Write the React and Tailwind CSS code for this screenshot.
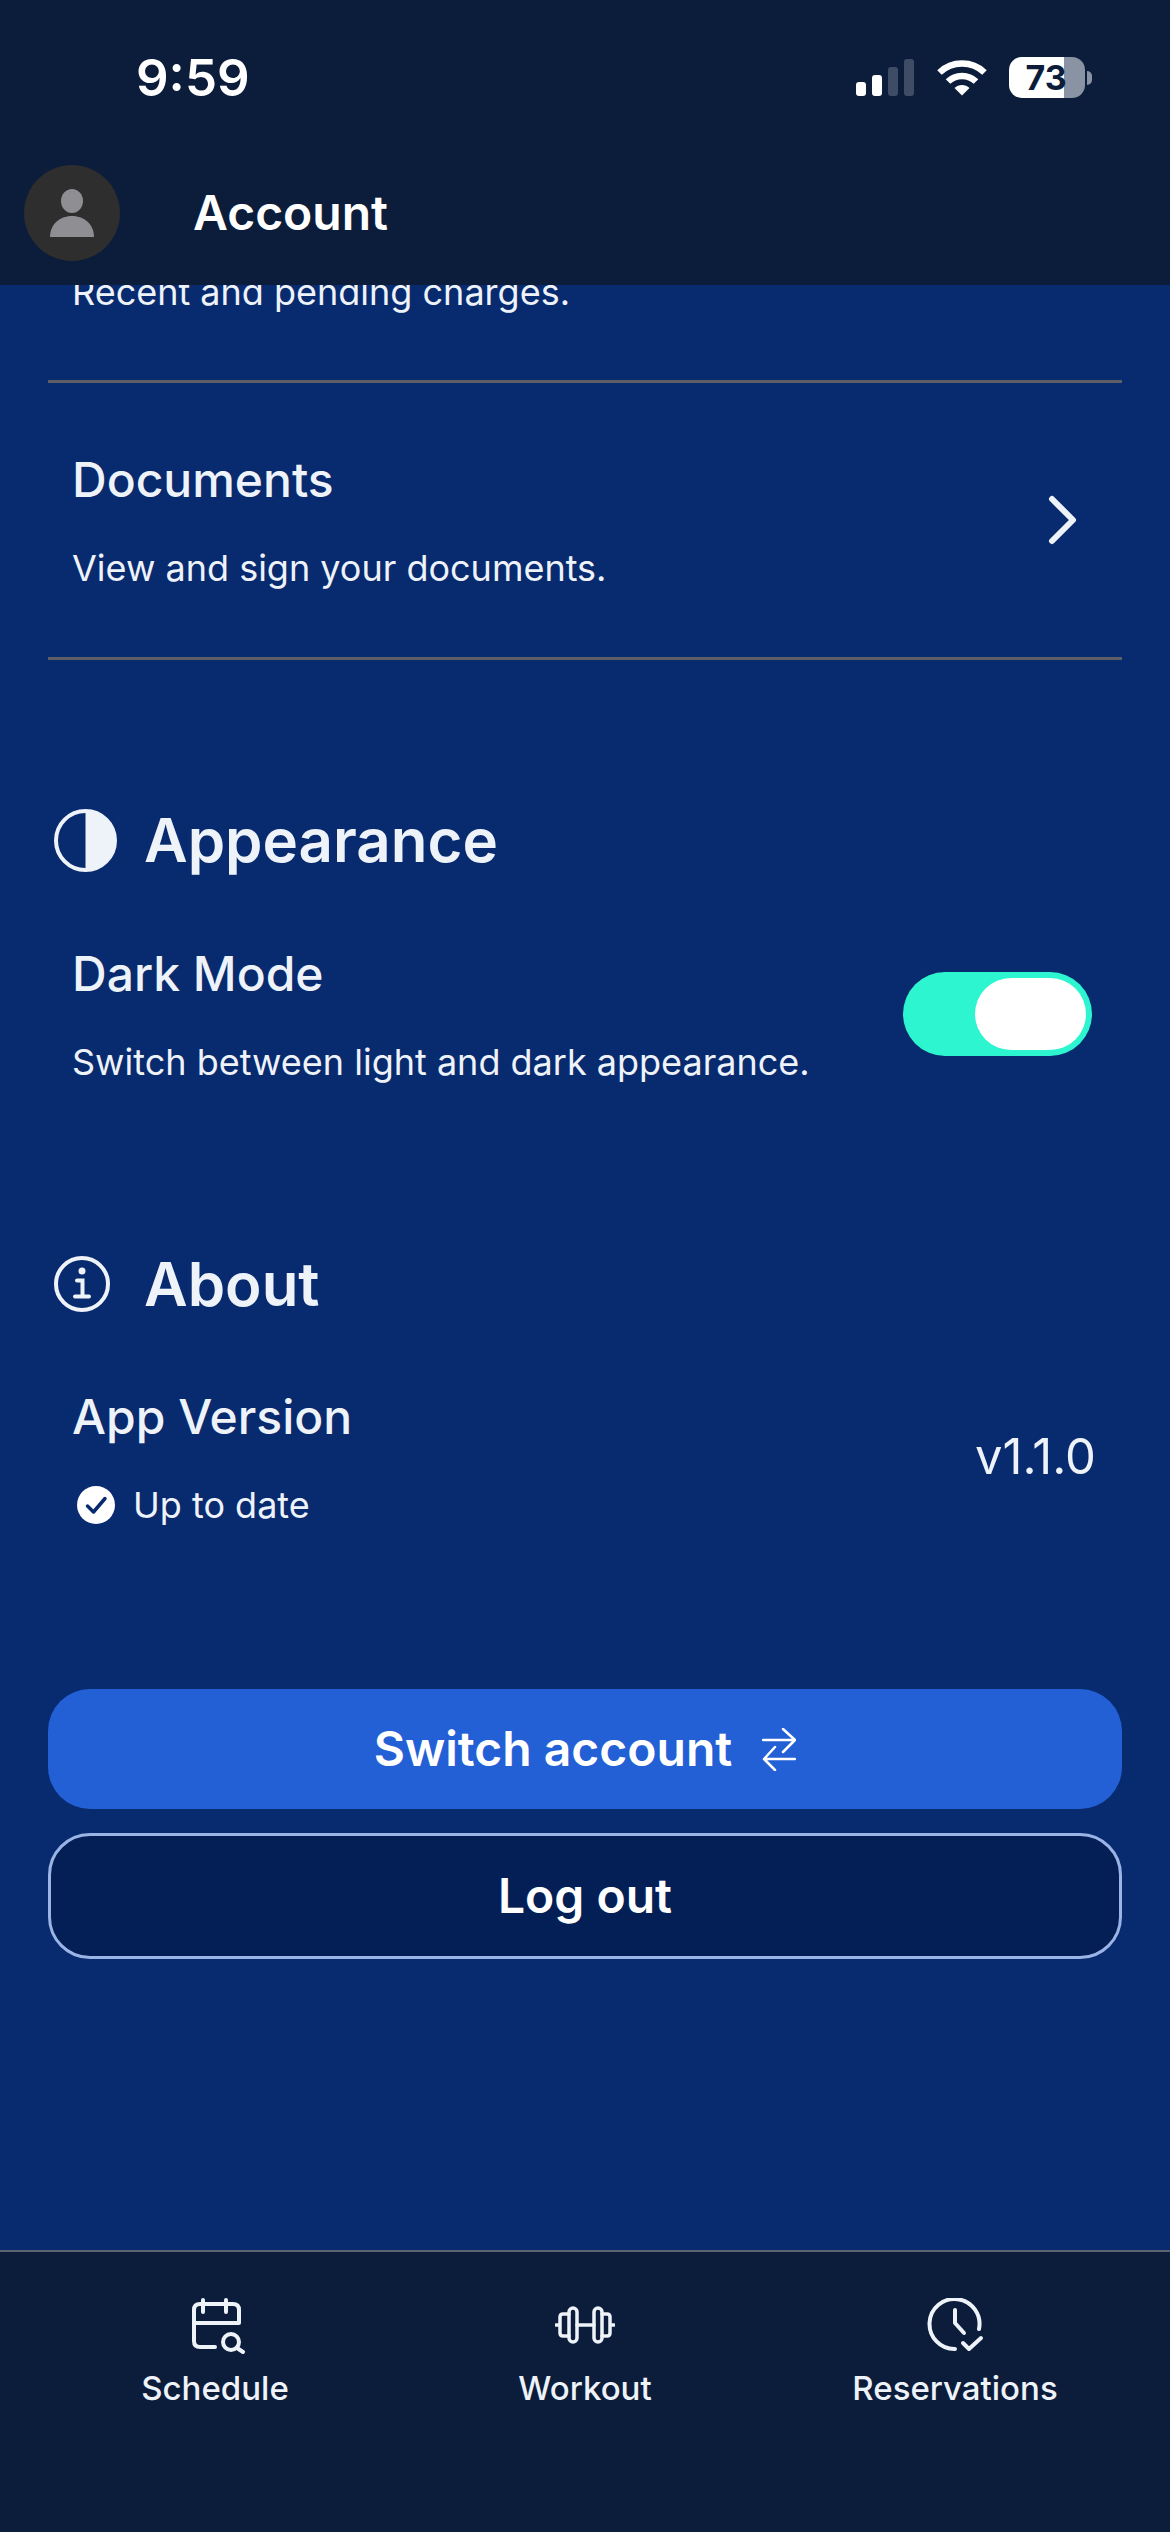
const FONT = "font-['Inter','Noto_Sans',sans-serif]";

function SignalBars() {
  return (
    <svg width="58" height="37" viewBox="0 0 58 37" fill="#fff">
      <rect x="0" y="23" width="10" height="14" rx="3" />
      <rect x="16" y="16" width="10" height="21" rx="3" />
      <rect x="32" y="8" width="10" height="29" rx="3" fill="#3e4c66" />
      <rect x="48" y="0" width="10" height="37" rx="3" fill="#3e4c66" />
    </svg>
  );
}

function Wifi() {
  return (
    <svg width="50" height="37" viewBox="0 0 50 37" fill="none" stroke="#fff" strokeWidth="6.5">
      <path d="M2.5 13.5C15 1.5 35 1.5 47.5 13.5" />
      <path d="M11 22.5C18.5 15 31.5 15 39 22.5" />
      <path d="M25 36.5L17.5 29C21.5 25 28.5 25 32.5 29Z" fill="#fff" stroke="none" />
    </svg>
  );
}

function Battery() {
  return (
    <div className="flex items-center">
      <div className="flex h-[41px] w-[76px] items-center justify-center rounded-[13px] bg-[linear-gradient(90deg,#fff_55px,#8a93a3_55px)] pr-[2px] text-[34px] leading-[41px] font-bold text-[#0b1d3a]">
        73
      </div>
      <div className="ml-[2px] h-[14px] w-[5px] rounded-r-full bg-[#8a93a3]" />
    </div>
  );
}

function Avatar() {
  return (
    <div className="flex h-[96px] w-[96px] items-center justify-center rounded-full bg-[#2e2e2e]">
      <svg width="44" height="48" viewBox="0 0 44 48" fill="#8e8e93">
        <ellipse cx="22" cy="12" rx="11" ry="12" />
        <path d="M0 48C0 36 9 27 22 27C35 27 44 36 44 48Z" />
      </svg>
    </div>
  );
}

function Row({ title, children, right }) {
  return (
    <div className="flex items-center justify-between py-[67px] pl-[24px]">
      <div>
        <div className="text-[48px] leading-[60px] font-[450] text-[#eef2f9]">{title}</div>
        <div className="mt-[36px] h-[44px] text-[36px] leading-[44px] text-[#eef2f9]">{children}</div>
      </div>
      {right}
    </div>
  );
}

function SectionTitle({ icon, children }) {
  return (
    <div className="flex h-[72px] items-center pl-[6px]">
      <div className="flex w-[90px] items-center">{icon}</div>
      <h2 className="text-[60px] leading-[72px] font-semibold text-[#eef2f9]">{children}</h2>
    </div>
  );
}

function NavItem({ icon, label }) {
  return (
    <div className="flex flex-col items-center">
      <div className="flex h-[56px] items-center justify-center">{icon}</div>
      <span className="mt-[12px] text-[33px] leading-[44px] font-medium text-[#eef2f9]">{label}</span>
    </div>
  );
}

export default function App() {
  return (
    <div className={`flex h-[2532px] w-[1170px] flex-col overflow-hidden bg-[#082a6e] ${FONT}`}>
      {/* Top bar */}
      <header className="relative z-10 h-[285px] shrink-0 bg-[#0b1d3a]">
        <div className="flex h-[165px] items-start justify-between pt-[52px] pr-[78px] pl-[136px]">
          <span className="text-[51px] leading-[52px] font-semibold text-white">9:59</span>
          <div className="flex items-center pt-[5px]">
            <SignalBars />
            <div className="mr-[22px] ml-[23px]">
              <Wifi />
            </div>
            <Battery />
          </div>
        </div>
        <div className="flex items-center pl-[24px]">
          <Avatar />
          <span className="ml-[73px] text-[48px] leading-[60px] font-semibold text-white">Account</span>
        </div>
      </header>

      <main className="flex-1 overflow-hidden px-[48px]">
        <div className="-mt-[15px] pl-[24px] text-[36px] leading-[44px] text-[#eef2f9]">Recent and pending charges.</div>
        <div className="mt-[66px] h-[3px] bg-[#5c5f66]" />
        <Row
          title="Documents"
          right={
            <svg width="30" height="52" viewBox="0 0 30 52" fill="none" stroke="#eef2f9" strokeWidth="6" strokeLinecap="round" strokeLinejoin="round" className="mr-[44px]">
              <path d="M4 5L25 26L4 47" />
            </svg>
          }
        >
          View and sign your documents.
        </Row>
        <div className="h-[3px] bg-[#5c5f66]" />

        <div className="mt-[144px]">
          <SectionTitle
            icon={
              <svg width="63" height="63" viewBox="0 0 63 63">
                <circle cx="31.5" cy="31.5" r="29.5" fill="none" stroke="#eef2f9" strokeWidth="4" />
                <path d="M31.5 2A29.5 29.5 0 0 1 31.5 61Z" fill="#eef2f9" />
              </svg>
            }
          >
            Appearance
          </SectionTitle>
        </div>
        <div className="mt-[1px]">
          <Row
            title="Dark Mode"
            right={
              <div className="mr-[30px] flex h-[84px] w-[189px] items-center justify-end rounded-full bg-[#2df5d0] pr-[6px]">
                <div className="h-[72px] w-[111px] rounded-full bg-white" />
              </div>
            }
          >
            Switch between light and dark appearance.
          </Row>
        </div>

        <div className="mt-[97px]">
          <SectionTitle
            icon={
              <svg width="56" height="56" viewBox="0 0 56 56" fill="none" stroke="#eef2f9" strokeWidth="4" strokeLinecap="round">
                <circle cx="28" cy="28" r="26" />
                <circle cx="28" cy="15" r="3.5" fill="#eef2f9" stroke="none" />
                <path d="M23 24.5H28.5V40M21 40.5H35" />
              </svg>
            }
          >
            About
          </SectionTitle>
        </div>
        <Row
          title="App Version"
          right={<span className="mr-[26px] text-[49px] leading-[60px] text-[#eef2f9]">v1.1.0</span>}
        >
          <span className="flex items-center">
            <svg width="38" height="38" viewBox="0 0 38 38" className="mr-[18px] ml-[5px]">
              <circle cx="19" cy="19" r="19" fill="#fff" />
              <path d="M10.5 20L16.5 26L28 12.5" fill="none" stroke="#082a6e" strokeWidth="3.5" strokeLinecap="round" strokeLinejoin="round" />
            </svg>
            Up to date
          </span>
        </Row>

        <div className="mt-[95px] flex flex-col gap-[24px]">
          <button className="flex h-[120px] items-center justify-center rounded-[42px] bg-[#2360d6] text-[48px] font-semibold text-white">
            Switch account
            <svg width="34" height="43" viewBox="0 0 34 43" fill="none" stroke="#fff" strokeWidth="2.5" strokeLinecap="round" strokeLinejoin="round" className="ml-[30px]">
              <path d="M1 12H33M21 1L33 12L21 24M33 31H2M13 19L2 31L13 42" />
            </svg>
          </button>
          <button className="h-[126px] rounded-[42px] border-[3px] border-[#9ab5e5] bg-[#041f55] text-[48px] font-semibold text-white">
            Log out
          </button>
        </div>
      </main>

      {/* Bottom tabs */}
      <nav className="grid h-[282px] shrink-0 grid-cols-3 border-t-2 border-[#5b6270] bg-[#0b1d3a] px-[30px] pt-[46px]">
        <NavItem
          label="Schedule"
          icon={
            <svg width="56" height="56" viewBox="0 0 56 56" fill="none" stroke="#eef2f9" strokeWidth="4" strokeLinecap="round" strokeLinejoin="round" className="ml-[6px]">
              <path d="M13 2V14M36 2V14M25 49H10C6 49 4 47 4 43V12C4 8 6 6 10 6H43C47 6 49 8 49 12V25H4" />
              <circle cx="41" cy="44" r="8" />
              <path d="M47 50L53 54" />
            </svg>
          }
        />
        <NavItem
          label="Workout"
          icon={
            <svg width="60" height="38" viewBox="0 0 60 38" fill="none" stroke="#eef2f9" strokeWidth="3.5" strokeLinecap="round" strokeLinejoin="round" className="mb-[3px]">
              <rect x="14" y="2" width="8" height="34" rx="4" />
              <rect x="39" y="2" width="8" height="34" rx="4" />
              <path d="M14 8H8C6 8 5 9 5 11V27C5 29 6 30 8 30H14M47 8H52C54 8 55 9 55 11V27C55 29 54 30 52 30H47M22 19H39M1 19H5M55 19H59" />
            </svg>
          }
        />
        <NavItem
          label="Reservations"
          icon={
            <svg width="58" height="56" viewBox="0 0 58 56" fill="none" stroke="#eef2f9" strokeWidth="4" strokeLinecap="round" strokeLinejoin="round">
              <path d="M29 51A25 25 0 1 1 53 31" />
              <path d="M29 12V25L38 35M37 45L43 51L55 40" />
            </svg>
          }
        />
      </nav>
    </div>
  );
}
